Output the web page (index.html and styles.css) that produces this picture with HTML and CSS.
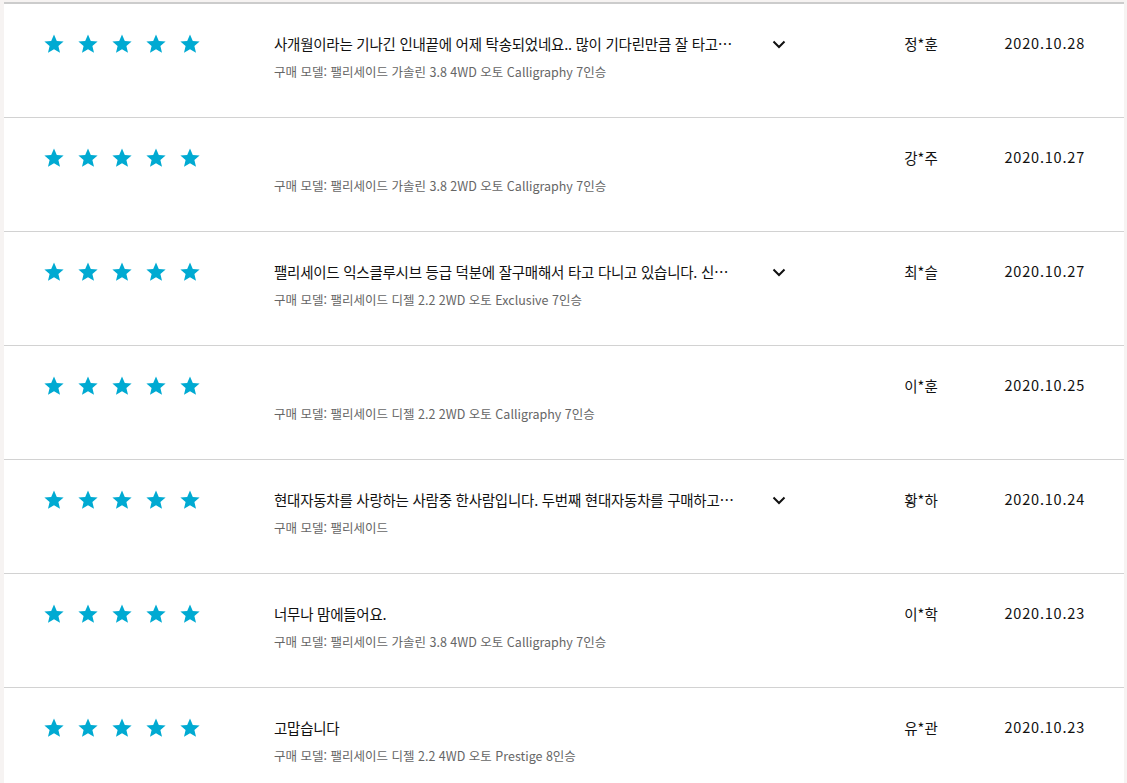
FILE: index.html
```html
<!DOCTYPE html>
<html lang="ko">
<head>
<meta charset="utf-8">
<title>리뷰</title>
<link rel="stylesheet" href="styles.css">
</head>
<body>
<div class="reviews">
  <div class="row">
    <div class="stars"><svg viewBox="0 0 20 20"><use href="#star"/></svg><svg viewBox="0 0 20 20"><use href="#star"/></svg><svg viewBox="0 0 20 20"><use href="#star"/></svg><svg viewBox="0 0 20 20"><use href="#star"/></svg><svg viewBox="0 0 20 20"><use href="#star"/></svg></div>
    <div class="body"><div class="title">사개월이라는 기나긴 인내끝에 어제 탁송되었네요.. 많이 기다린만큼 잘 타고…</div><div class="model">구매 모델: 팰리세이드 가솔린 3.8 4WD 오토 Calligraphy 7인승</div></div>
    <div class="more"><svg viewBox="0 0 14 9"><polyline points="1.5,1.5 7,7 12.5,1.5"/></svg></div>
    <div class="name">정*훈</div>
    <div class="date">2020.10.28</div>
  </div>
  <div class="row">
    <div class="stars"><svg viewBox="0 0 20 20"><use href="#star"/></svg><svg viewBox="0 0 20 20"><use href="#star"/></svg><svg viewBox="0 0 20 20"><use href="#star"/></svg><svg viewBox="0 0 20 20"><use href="#star"/></svg><svg viewBox="0 0 20 20"><use href="#star"/></svg></div>
    <div class="body"><div class="title"></div><div class="model">구매 모델: 팰리세이드 가솔린 3.8 2WD 오토 Calligraphy 7인승</div></div>
    <div class="more"></div>
    <div class="name">강*주</div>
    <div class="date">2020.10.27</div>
  </div>
  <div class="row">
    <div class="stars"><svg viewBox="0 0 20 20"><use href="#star"/></svg><svg viewBox="0 0 20 20"><use href="#star"/></svg><svg viewBox="0 0 20 20"><use href="#star"/></svg><svg viewBox="0 0 20 20"><use href="#star"/></svg><svg viewBox="0 0 20 20"><use href="#star"/></svg></div>
    <div class="body"><div class="title">팰리세이드 익스클루시브 등급 덕분에 잘구매해서 타고 다니고 있습니다. 신…</div><div class="model">구매 모델: 팰리세이드 디젤 2.2 2WD 오토 Exclusive 7인승</div></div>
    <div class="more"><svg viewBox="0 0 14 9"><polyline points="1.5,1.5 7,7 12.5,1.5"/></svg></div>
    <div class="name">최*슬</div>
    <div class="date">2020.10.27</div>
  </div>
  <div class="row">
    <div class="stars"><svg viewBox="0 0 20 20"><use href="#star"/></svg><svg viewBox="0 0 20 20"><use href="#star"/></svg><svg viewBox="0 0 20 20"><use href="#star"/></svg><svg viewBox="0 0 20 20"><use href="#star"/></svg><svg viewBox="0 0 20 20"><use href="#star"/></svg></div>
    <div class="body"><div class="title"></div><div class="model">구매 모델: 팰리세이드 디젤 2.2 2WD 오토 Calligraphy 7인승</div></div>
    <div class="more"></div>
    <div class="name">이*훈</div>
    <div class="date">2020.10.25</div>
  </div>
  <div class="row">
    <div class="stars"><svg viewBox="0 0 20 20"><use href="#star"/></svg><svg viewBox="0 0 20 20"><use href="#star"/></svg><svg viewBox="0 0 20 20"><use href="#star"/></svg><svg viewBox="0 0 20 20"><use href="#star"/></svg><svg viewBox="0 0 20 20"><use href="#star"/></svg></div>
    <div class="body"><div class="title">현대자동차를 사랑하는 사람중 한사람입니다. 두번째 현대자동차를 구매하고…</div><div class="model">구매 모델: 팰리세이드</div></div>
    <div class="more"><svg viewBox="0 0 14 9"><polyline points="1.5,1.5 7,7 12.5,1.5"/></svg></div>
    <div class="name">황*하</div>
    <div class="date">2020.10.24</div>
  </div>
  <div class="row">
    <div class="stars"><svg viewBox="0 0 20 20"><use href="#star"/></svg><svg viewBox="0 0 20 20"><use href="#star"/></svg><svg viewBox="0 0 20 20"><use href="#star"/></svg><svg viewBox="0 0 20 20"><use href="#star"/></svg><svg viewBox="0 0 20 20"><use href="#star"/></svg></div>
    <div class="body"><div class="title">너무나 맘에들어요.</div><div class="model">구매 모델: 팰리세이드 가솔린 3.8 4WD 오토 Calligraphy 7인승</div></div>
    <div class="more"></div>
    <div class="name">이*학</div>
    <div class="date">2020.10.23</div>
  </div>
  <div class="row">
    <div class="stars"><svg viewBox="0 0 20 20"><use href="#star"/></svg><svg viewBox="0 0 20 20"><use href="#star"/></svg><svg viewBox="0 0 20 20"><use href="#star"/></svg><svg viewBox="0 0 20 20"><use href="#star"/></svg><svg viewBox="0 0 20 20"><use href="#star"/></svg></div>
    <div class="body"><div class="title">고맙습니다</div><div class="model">구매 모델: 팰리세이드 디젤 2.2 4WD 오토 Prestige 8인승</div></div>
    <div class="more"></div>
    <div class="name">유*관</div>
    <div class="date">2020.10.23</div>
  </div>
</div>
<svg class="defs" width="0" height="0">
  <defs>
    <polygon id="star" points="10,0.6 12.8,6.9 19.6,7.5 14.4,12 16,18.8 10,15.2 4,18.8 5.6,12 0.4,7.5 7.2,6.9"/>
  </defs>
</svg>
</body>
</html>
```
FILE: styles.css
```css
html, body {
  margin: 0;
  padding: 0;
}
body {
  background: #f6f3f2;
  font-family: "Noto Sans CJK KR", "Noto Sans", sans-serif;
  color: #111;
}
.reviews {
  margin: 2px 3px 0 4px;
  background: #fff;
  border-top: 2px solid #cccccc;
}
.row {
  display: grid;
  grid-template-columns: 230px 480px 50px 37px 160px 1fr;
  align-items: start;
  height: 113px;
  padding: 0 40px;
  border-bottom: 1px solid #d2d2d2;
}
.stars {
  display: flex;
  gap: 14px;
  padding-top: 30px;
}
.stars svg {
  width: 20px;
  height: 20px;
  fill: #00aad2;
}
.body {
  padding-top: 29px;
  min-width: 0;
}
.title {
  height: 22px;
  font-size: 14.5px;
  line-height: 22px;
  letter-spacing: -0.25px;
  color: #111;
  white-space: nowrap;
  overflow: hidden;
  text-overflow: ellipsis;
  max-width: 480px;
}
.model {
  margin-top: 7px;
  font-size: 12.5px;
  line-height: 20px;
  color: #666;
  white-space: nowrap;
}
.more {
  display: flex;
  justify-content: center;
  padding-top: 36px;
}
.more svg {
  width: 14px;
  height: 9px;
  fill: none;
  stroke: #111;
  stroke-width: 2;
}
.name {
  grid-column: 5;
  text-align: center;
  padding-top: 29px;
  font-size: 14.5px;
  line-height: 22px;
}
.date {
  text-align: right;
  padding-top: 28px;
  font-size: 14.5px;
  line-height: 22px;
  letter-spacing: 0.8px;
  margin-right: -1px;
  white-space: nowrap;
}
.defs {
  position: absolute;
  width: 0;
  height: 0;
}
```
